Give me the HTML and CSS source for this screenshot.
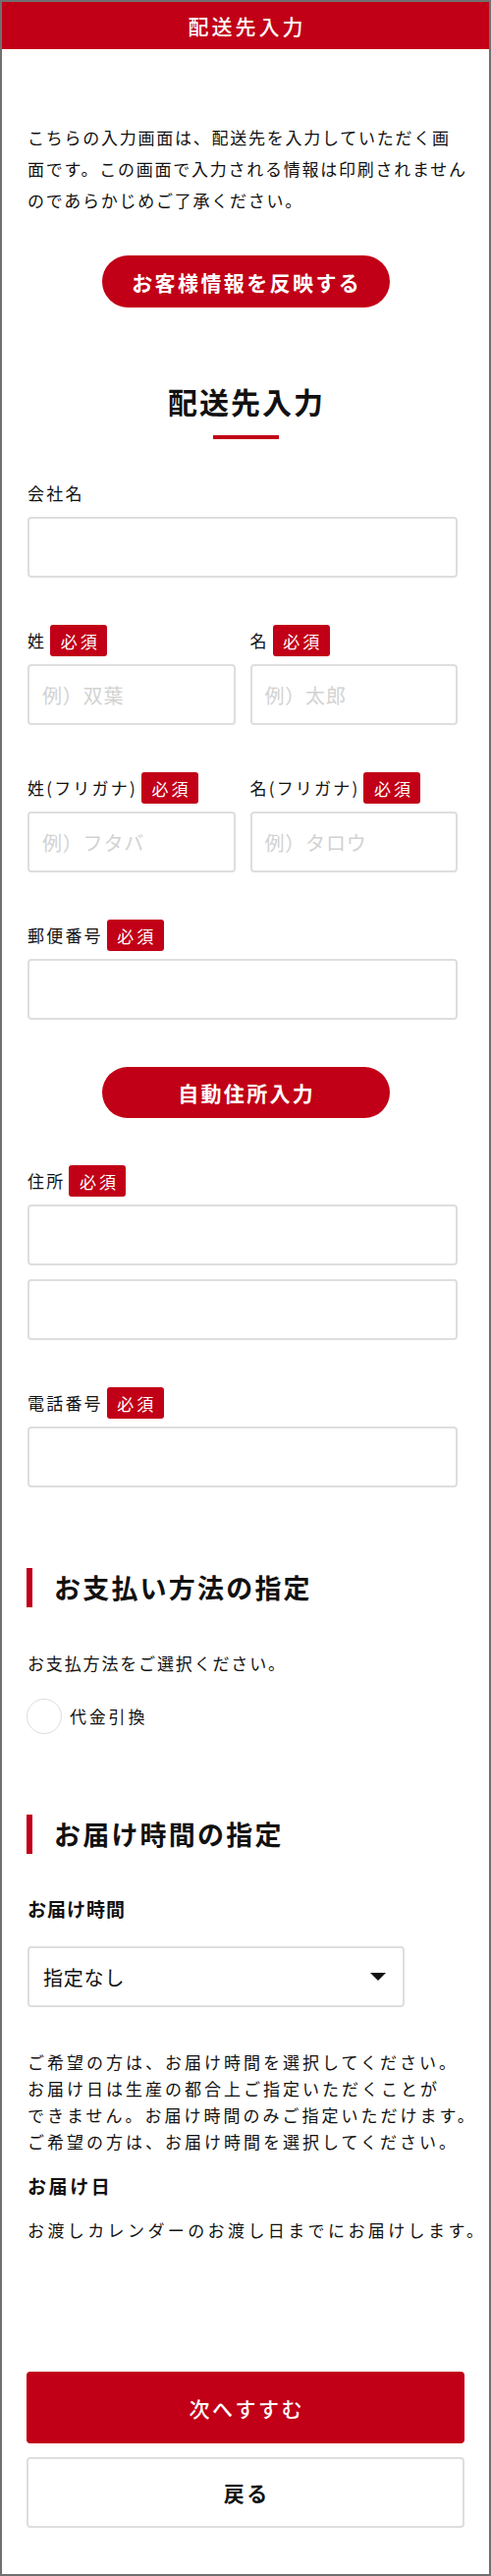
FILE: index.html
```html
<!DOCTYPE html>
<html lang="ja">
<head>
<meta charset="utf-8">
<title>配送先入力</title>
<link rel="stylesheet" href="styles.css">
</head>
<body>
<div class="page">
  <header class="topbar">配送先入力</header>
  <main class="content">
    <p class="intro">こちらの入力画面は、配送先を入力していただく画<br>面です。この画面で入力される情報は印刷されません<br>のであらかじめご了承ください。</p>
    <div class="pill-row"><button class="pill" type="button">お客様情報を反映する</button></div>

    <h1 class="title">配送先入力</h1>
    <div class="title-line"></div>

    <div class="field field-first">
      <div class="label-row"><span class="label">会社名</span></div>
      <input class="text-input" type="text">
    </div>

    <div class="field-grid">
      <div class="col">
        <div class="label-row"><span class="label">姓</span><span class="badge">必須</span></div>
        <input class="text-input" type="text" placeholder="例）双葉">
      </div>
      <div class="col">
        <div class="label-row"><span class="label">名</span><span class="badge">必須</span></div>
        <input class="text-input" type="text" placeholder="例）太郎">
      </div>
    </div>

    <div class="field-grid">
      <div class="col">
        <div class="label-row"><span class="label">姓(フリガナ)</span><span class="badge">必須</span></div>
        <input class="text-input" type="text" placeholder="例）フタバ">
      </div>
      <div class="col">
        <div class="label-row"><span class="label">名(フリガナ)</span><span class="badge">必須</span></div>
        <input class="text-input" type="text" placeholder="例）タロウ">
      </div>
    </div>

    <div class="field">
      <div class="label-row"><span class="label">郵便番号</span><span class="badge">必須</span></div>
      <input class="text-input" type="text">
    </div>

    <div class="pill-row pill-row-auto"><button class="pill pill-auto" type="button">自動住所入力</button></div>

    <div class="field">
      <div class="label-row"><span class="label">住所</span><span class="badge">必須</span></div>
      <input class="text-input" type="text">
      <input class="text-input text-input-second" type="text">
    </div>

    <div class="field">
      <div class="label-row"><span class="label">電話番号</span><span class="badge">必須</span></div>
      <input class="text-input" type="text">
    </div>

    <h2 class="section-heading">お支払い方法の指定</h2>
    <p class="pay-text">お支払方法をご選択ください。</p>
    <label class="radio-row">
      <span class="radio-circle"></span>
      <span class="radio-label">代金引換</span>
    </label>

    <h2 class="section-heading">お届け時間の指定</h2>
    <p class="sub-label">お届け時間</p>
    <div class="select-box">
      <span class="select-text">指定なし</span>
      <svg class="caret" width="16" height="8" viewBox="0 0 16 8"><polygon points="0,0 16,0 8,8" fill="#111"/></svg>
    </div>
    <p class="notes">ご希望の方は、お届け時間を選択してください。<br>お届け日は生産の都合上ご指定いただくことが<br>できません。お届け時間のみご指定いただけます。<br>ご希望の方は、お届け時間を選択してください。</p>
    <p class="sub-label sub-label-date">お届け日</p>
    <p class="final-text">お渡しカレンダーのお渡し日までにお届けします。</p>

    <button class="btn-next" type="button">次へすすむ</button>
    <button class="btn-back" type="button">戻る</button>
  </main>
</div>
</body>
</html>
```

FILE: styles.css
```css
* {
  box-sizing: border-box;
}

html, body {
  margin: 0;
  padding: 0;
  background: #ffffff;
}

body {
  font-family: "Noto Sans CJK JP", "Noto Sans", sans-serif;
  color: #111111;
}

.page {
  width: 500px;
  height: 2622px;
  border: 2px solid #707070;
  background: #ffffff;
  overflow: hidden;
}

.topbar {
  height: 48px;
  background: #c10017;
  color: #ffffff;
  font-size: 21px;
  font-weight: 500;
  letter-spacing: 3px;
  line-height: 48px;
  text-align: center;
  padding-left: 3px;
}

.content {
  padding: 0 26px;
}

p, h1, h2 {
  margin: 0;
}

.intro {
  margin-top: 74px;
  font-size: 17px;
  line-height: 32px;
  letter-spacing: 1.75px;
  white-space: nowrap;
}

.pill-row {
  display: flex;
  justify-content: center;
  margin-top: 40px;
}

.pill {
  width: 293px;
  height: 53px;
  border: none;
  border-radius: 27px;
  background: #c10017;
  color: #ffffff;
  font-family: inherit;
  font-size: 21px;
  font-weight: 700;
  letter-spacing: 2.4px;
  padding: 0 0 0 2.4px;
  cursor: pointer;
}

.pill-row-auto {
  margin-top: 48px;
}

.pill-auto {
  height: 52px;
  letter-spacing: 2.3px;
  padding-left: 2.3px;
}

.title {
  margin-top: 75px;
  font-size: 30px;
  font-weight: 700;
  line-height: 40px;
  letter-spacing: 2px;
  padding-left: 2px;
  text-align: center;
}

.title-line {
  width: 67px;
  height: 4px;
  margin: 15px auto 0;
  background: #c10017;
}

.field,
.field-grid {
  margin-top: 48px;
  width: 438px;
}

.field-first {
  margin-top: 39px;
}

.field-grid {
  display: grid;
  grid-template-columns: 1fr 1fr;
  column-gap: 15px;
}

.label-row {
  display: flex;
  align-items: center;
  gap: 4px;
  height: 32px;
}

.label {
  font-size: 17px;
  letter-spacing: 2.2px;
  line-height: 32px;
  white-space: nowrap;
}

.badge {
  display: inline-flex;
  align-items: center;
  justify-content: center;
  width: 58px;
  height: 32px;
  padding-left: 3px;
  border-radius: 3px;
  background: #c10017;
  color: #ffffff;
  font-size: 17px;
  letter-spacing: 3px;
}

.text-input {
  display: block;
  width: 100%;
  height: 62px;
  margin: 8px 0 0;
  padding: 0 13px;
  border: 2px solid #dedede;
  border-radius: 4px;
  background: #ffffff;
  font-family: inherit;
  font-size: 20px;
  letter-spacing: 0.8px;
  color: #111111;
  outline: none;
}

.text-input::placeholder {
  color: #d2d2d2;
}

.text-input-second {
  margin-top: 14px;
}

.section-heading {
  margin: 82px 0 0 -1px;
  height: 40px;
  border-left: 6px solid #c10017;
  padding-left: 22px;
  font-size: 27px;
  font-weight: 700;
  line-height: 40px;
  letter-spacing: 2.2px;
  white-space: nowrap;
}

.pay-text {
  margin-top: 43px;
  font-size: 17px;
  line-height: 27px;
  letter-spacing: 1.85px;
}

.radio-row {
  display: flex;
  align-items: center;
  gap: 8px;
  margin-top: 23px;
  margin-left: -1px;
  height: 36px;
}

.radio-circle {
  width: 36px;
  height: 36px;
  border: 1.5px solid #dcdcdc;
  border-radius: 50%;
  background: #ffffff;
}

.radio-label {
  font-size: 17px;
  letter-spacing: 2.8px;
  line-height: 36px;
}

.sub-label {
  margin-top: 42px;
  font-size: 19px;
  font-weight: 700;
  line-height: 27px;
  letter-spacing: 1px;
}

.sub-label-date {
  margin-top: 18px;
  letter-spacing: 2.6px;
}

.select-box {
  display: flex;
  align-items: center;
  justify-content: space-between;
  width: 384px;
  height: 62px;
  margin-top: 25px;
  padding: 0 17px 0 14px;
  border: 2px solid #dedede;
  border-radius: 4px;
}

.select-text {
  font-size: 20px;
  letter-spacing: 0.8px;
}

.caret {
  display: block;
}

.notes {
  margin-top: 42px;
  font-size: 17px;
  line-height: 27px;
  letter-spacing: 3px;
  white-space: nowrap;
}

.final-text {
  margin-top: 18px;
  font-size: 17px;
  line-height: 27px;
  letter-spacing: 3.4px;
  white-space: nowrap;
}

.btn-next,
.btn-back {
  display: block;
  width: 446px;
  margin-left: -1px;
  border-radius: 4px;
  font-family: inherit;
  font-size: 21px;
  letter-spacing: 2.5px;
  padding: 0 0 0 2.5px;
  cursor: pointer;
}

.btn-next {
  margin-top: 131px;
  height: 73px;
  border: none;
  background: #c10017;
  color: #ffffff;
  font-weight: 500;
}

.btn-back {
  margin-top: 14px;
  height: 72px;
  border: 2px solid #dedede;
  background: #ffffff;
  color: #111111;
  font-weight: 700;
}
```
